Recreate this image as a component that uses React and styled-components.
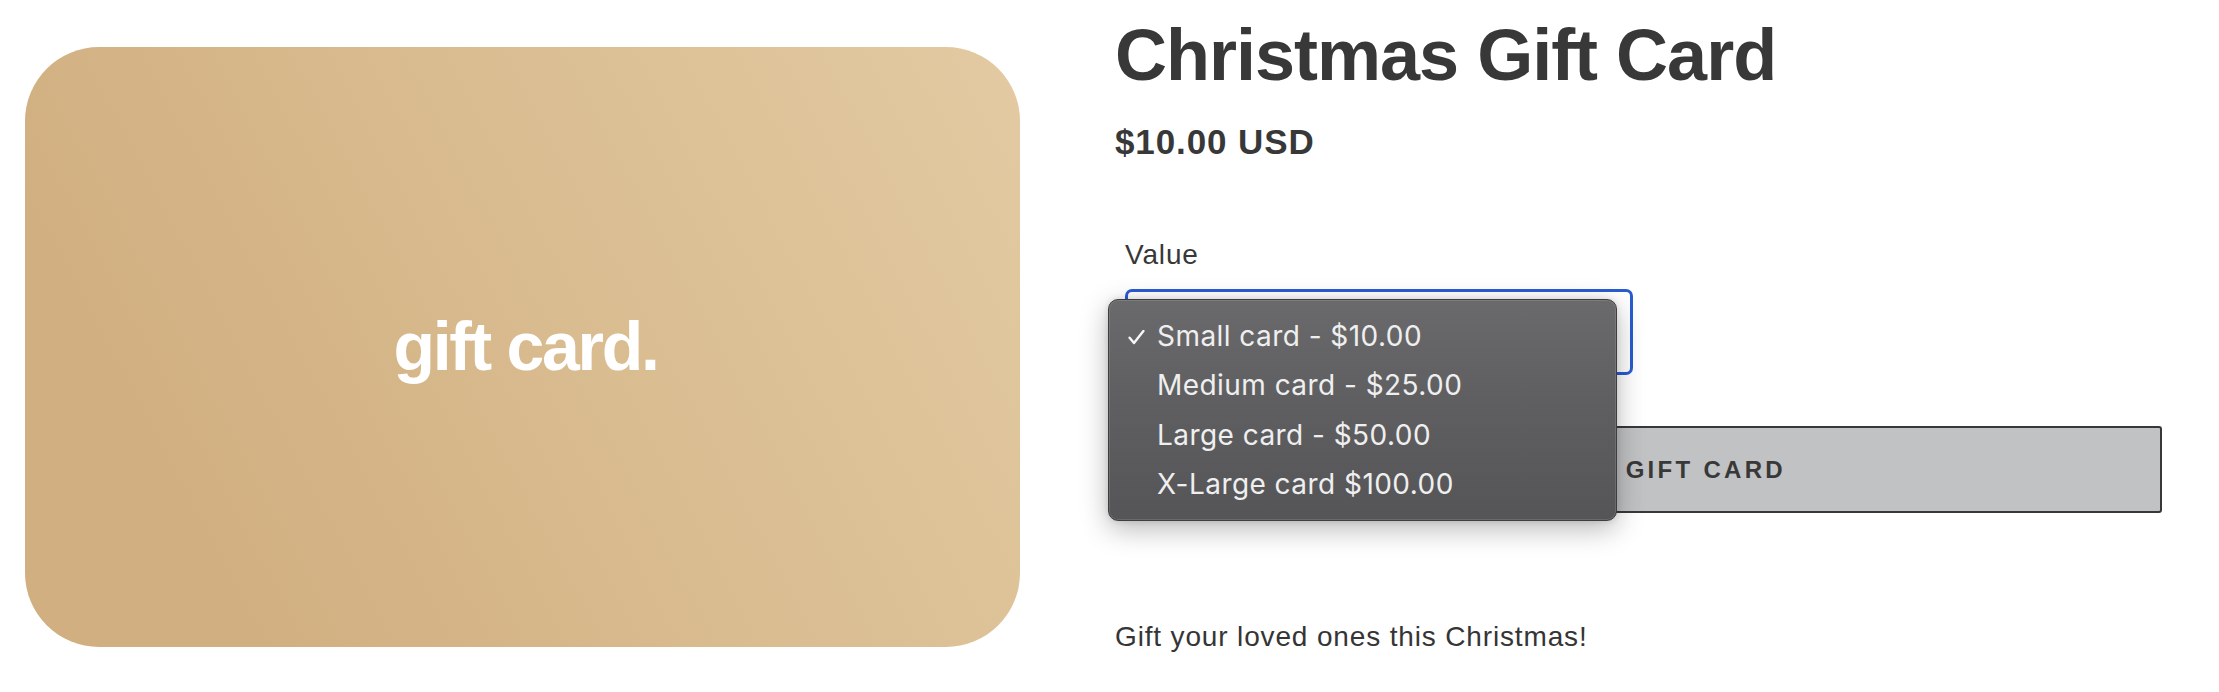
import React from 'react';
import styled, { createGlobalStyle } from 'styled-components';

const GlobalStyle = createGlobalStyle`
  html, body {
    margin: 0;
    padding: 0;
    background: #ffffff;
  }
  body {
    font-family: 'Liberation Sans', Arial, sans-serif;
    color: #383838;
  }
`;

const Page = styled.main`
  display: flex;
  align-items: flex-start;
  gap: 95px;
  width: 2219px;
  height: 692px;
  overflow: hidden;
`;

const Media = styled.section`
  padding: 47px 0 0 25px;
`;

const GiftImage = styled.div`
  width: 995px;
  height: 600px;
  border-radius: 74px;
  background: linear-gradient(62deg, #d1af81 18%, #d9bc90 55%, #e3caa2 100%);
  display: flex;
  align-items: center;
  justify-content: center;
`;

const GiftWord = styled.span`
  font-family: 'Liberation Sans', Arial, sans-serif;
  font-weight: 700;
  font-size: 68px;
  letter-spacing: -2.3px;
  line-height: 1;
  color: #ffffff;
  margin: 0 0 2px 6px;
`;

const Info = styled.section`
  width: 1047px;
  padding-top: 19px;
  display: flex;
  flex-direction: column;
`;

const Title = styled.h1`
  margin: 0;
  font-size: 72px;
  line-height: 1;
  font-weight: 700;
  letter-spacing: -1px;
  color: #383838;
`;

const Price = styled.div`
  margin-top: 33px;
  font-size: 35px;
  line-height: 1;
  font-weight: 700;
  letter-spacing: 0.9px;
  color: #383838;
`;

const Field = styled.div`
  margin-top: 82px;
  padding-left: 10px;
  display: flex;
  flex-direction: column;
`;

const Label = styled.label`
  font-size: 28px;
  line-height: 1;
  letter-spacing: 0.85px;
  color: #383838;
`;

const SelectWrap = styled.div`
  position: relative;
  margin-top: 20px;
  width: 508px;
  height: 86px;
`;

const SelectBox = styled.div`
  box-sizing: border-box;
  width: 100%;
  height: 100%;
  border: 3px solid #2a5bd2;
  border-radius: 7px;
  background: #fff;
  display: flex;
  align-items: center;
  padding-left: 22px;
  font-size: 28px;
  color: #383838;
`;

const Menu = styled.ul`
  position: absolute;
  left: -17px;
  top: 10px;
  z-index: 5;
  box-sizing: border-box;
  width: 509px;
  margin: 0;
  padding: 11px 0;
  list-style: none;
  border: 1px solid #3e3e40;
  border-radius: 10px;
  background: linear-gradient(180deg, #6a6a6c 0%, #5f5f61 45%, #555557 100%);
  box-shadow: inset 0 0 0 1px rgba(255, 255, 255, 0.12), 0 8px 28px rgba(0, 0, 0, 0.28),
    0 0 6px rgba(0, 0, 0, 0.12);
`;

const Option = styled.li`
  position: relative;
  height: 49.5px;
  display: flex;
  align-items: center;
  padding-left: 48px;
  font-family: 'Inter', 'Noto Sans', sans-serif;
  font-size: 28px;
  letter-spacing: 0.45px;
  color: #efefef;
  white-space: nowrap;

  & svg {
    position: absolute;
    left: 19px;
    top: 50%;
    transform: translateY(-42%);
  }
`;

const CartButton = styled.button`
  margin-top: 51px;
  box-sizing: border-box;
  width: 1047px;
  height: 87px;
  border: 2px solid #383838;
  border-radius: 3px;
  background: #c1c2c4;
  font-family: 'Liberation Sans', Arial, sans-serif;
  font-size: 24px;
  font-weight: 700;
  letter-spacing: 3.3px;
  color: #383838;
  display: flex;
  align-items: center;
  justify-content: center;
  padding: 0 0 0 16px;
`;

const Description = styled.p`
  margin: 110px 0 0;
  font-size: 28px;
  line-height: 1;
  letter-spacing: 0.85px;
  color: #353535;
`;

const options = [
  { label: 'Small card - $10.00', selected: true },
  { label: 'Medium card - $25.00' },
  { label: 'Large card - $50.00' },
  { label: 'X-Large card $100.00' },
];

function Check() {
  return (
    <svg width="17" height="15" viewBox="0 0 17 15" fill="none">
      <path d="M1.6 8 L6 13.4 L15.4 1.3" stroke="#f6f6f6" strokeWidth="2.4" strokeLinecap="round" strokeLinejoin="round" />
    </svg>
  );
}

export default function App() {
  return (
    <>
      <GlobalStyle />
      <Page>
        <Media>
          <GiftImage>
            <GiftWord>gift card.</GiftWord>
          </GiftImage>
        </Media>
        <Info>
          <Title>Christmas Gift Card</Title>
          <Price>$10.00 USD</Price>
          <Field>
            <Label>Value</Label>
            <SelectWrap>
              <SelectBox>Small card - $10.00</SelectBox>
              <Menu>
                {options.map((opt) => (
                  <Option key={opt.label}>
                    {opt.selected && <Check />}
                    {opt.label}
                  </Option>
                ))}
              </Menu>
            </SelectWrap>
          </Field>
          <CartButton>SEND A GIFT CARD</CartButton>
          <Description>Gift your loved ones this Christmas!</Description>
        </Info>
      </Page>
    </>
  );
}
